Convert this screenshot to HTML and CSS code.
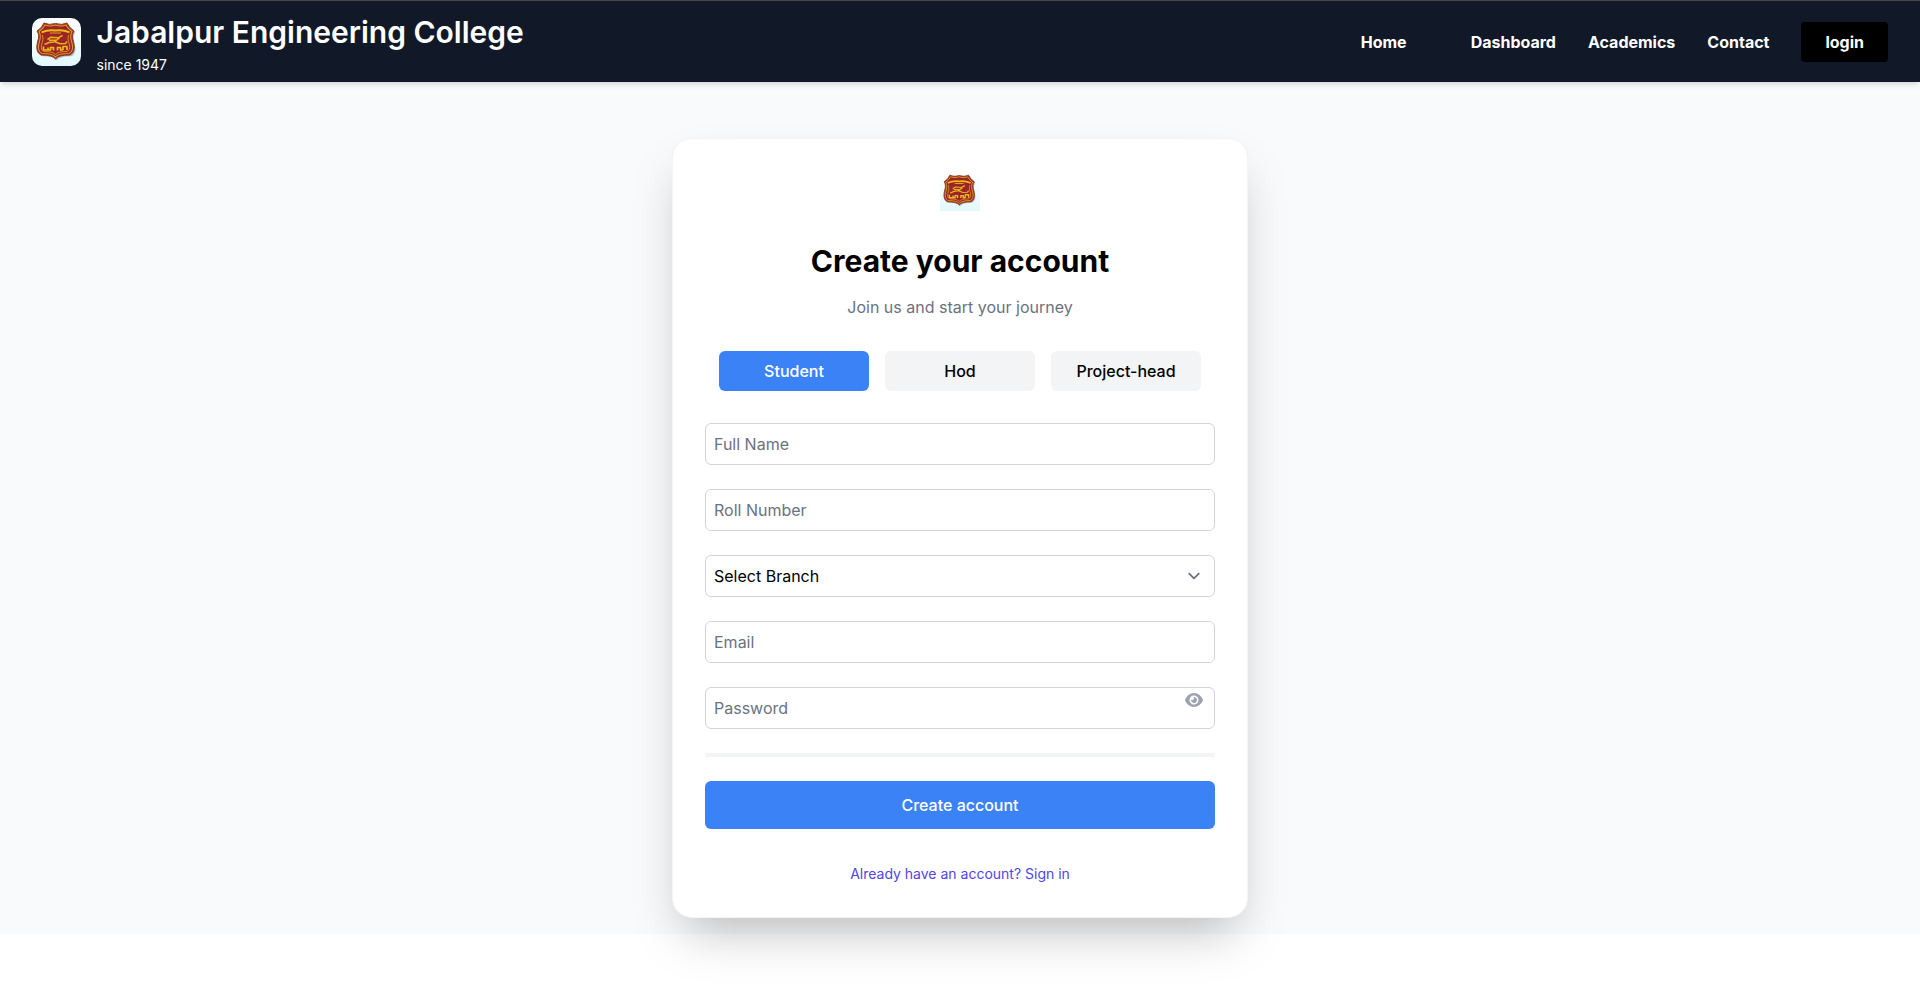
FILE: index.html
```html
<!DOCTYPE html>
<html lang="en">
<head>
<meta charset="utf-8">
<title>Jabalpur Engineering College</title>
<link rel="stylesheet" href="styles.css">
</head>
<body>
<svg class="defs" width="0" height="0" aria-hidden="true">
  <defs>
    <linearGradient id="plate" x1="0" y1="0" x2="0" y2="1">
      <stop offset="0" stop-color="#ffffff"/>
      <stop offset="1" stop-color="#e3f8fc"/>
    </linearGradient>
  </defs>
  <symbol id="crest" viewBox="0 0 49 48" preserveAspectRatio="none">
    <rect width="49" height="48" fill="url(#plate)"/>
    <path transform="translate(1.3 1.2)" opacity=".35" fill="#506068" d="M12 5Q18 8 23.500 8Q29 8 35 5L42 13Q39 18 41.500 25Q44 35 38 37Q27 37 23.500 41Q20 37 9 37Q3 35 5.500 25Q8 18 5 13Z"/>
    <path fill="#9c2328" stroke="#8b3a20" stroke-width="1" d="M12 5Q17 7.500 23.500 5.500Q30 7.500 35 5Q37 10 42 13Q39 17 41.500 24Q44 34 38 37Q26 37 23.500 41Q21 37 9 37Q3 34 5.500 24Q8 17 5 13Q10 10 12 5Z"/>
    <path fill="none" stroke="#d9a321" stroke-width="1.100" d="M13 7Q18 9 23.500 7Q29 9 34 7Q36 11 40 13.500Q37.500 18 40 25Q42 33 37 35.500Q26 35.500 23.500 39Q21 35.500 10 35.500Q5 33 7 25Q9.500 18 7 13.500Q11 11 13 7Z"/>
    <path fill="none" stroke="#d9a321" stroke-width=".9" d="M10.500 17Q12 21 9.500 27Q8.500 32 12 33.500Q21 33.500 23.500 36.500Q26 33.500 35 33.500Q38.500 32 37.500 27Q35 21 36.500 17"/>
    <path fill="none" stroke="#f0bb16" stroke-width="2" d="M9.500 14.300Q16 11.500 23.500 12.500Q31 11.500 37.500 14.300"/>
    <path fill="none" stroke="#d9a321" stroke-width="1.200" d="M18 15H29"/>
    <path fill="none" stroke="#e8b31a" stroke-width="1.500" stroke-linejoin="round" d="M15.500 21.500L19 19.200L26 19.800L30.500 17.500M27.500 20L22 24L17 24.500L12.500 26.500M22.500 23.500L28 25.800L33.500 25.500L35 23.500M17 22.300H24"/>
    <path fill="none" stroke="#f0bb16" stroke-width="1.700" stroke-linejoin="round" d="M11.500 28.500V32H16V29.500M18.500 32.500V29.500H21.500V32.500M25.500 32.500V29.500H28.500V32.500M31 32V28.500H35V32M16 32H19M28 32H31"/>
  </symbol>
</svg>
<header class="navbar">
  <div class="brand">
    <svg class="brand-logo"><use href="#crest"/></svg>
    <div class="brand-text">
      <div class="brand-name">Jabalpur Engineering College</div>
      <div class="brand-since">since 1947</div>
    </div>
  </div>
  <nav class="nav">
    <a>Home</a>
    <span></span>
    <a>Dashboard</a>
    <a>Academics</a>
    <a>Contact</a>
    <button class="login">login</button>
  </nav>
</header>
<main class="page">
  <section class="card">
    <svg class="card-logo"><use href="#crest"/></svg>
    <h1 class="title">Create your account</h1>
    <p class="subtitle">Join us and start your journey</p>
    <div class="roles">
      <button class="role role-active">Student</button>
      <button class="role">Hod</button>
      <button class="role">Project-head</button>
    </div>
    <form class="form">
      <input class="field" type="text" placeholder="Full Name">
      <input class="field" type="text" placeholder="Roll Number">
      <div class="field-wrap">
        <select class="field"><option>Select Branch</option></select>
        <svg class="chevron" viewBox="0 0 20 20"><path fill="none" stroke="#6b7280" stroke-width="1.5" stroke-linecap="round" stroke-linejoin="round" d="M6 8l4 4 4-4"/></svg>
      </div>
      <input class="field" type="email" placeholder="Email">
      <div class="field-wrap">
        <input class="field" type="password" placeholder="Password">
        <svg class="eye" viewBox="0 0 576 512"><path fill="currentColor" d="M288 32c-80.800 0-145.500 36.800-192.600 80.600C48.600 156 17.300 208 2.500 243.700c-3.300 7.900-3.300 16.700 0 24.600C17.300 304 48.600 356 95.400 399.400C142.500 443.200 207.200 480 288 480s145.500-36.800 192.600-80.600c46.800-43.500 78.100-95.400 93-131.100c3.300-7.900 3.300-16.700 0-24.600c-14.900-35.700-46.200-87.700-93-131.100C433.500 68.800 368.800 32 288 32zM144 256a144 144 0 1 1 288 0 144 144 0 1 1-288 0zm144-64c0 35.300-28.700 64-64 64c-7.100 0-13.900-1.200-20.300-3.300c-5.500-1.800-11.900 1.600-11.700 7.400c.3 6.900 1.300 13.800 3.200 20.700c13.700 51.200 66.400 81.600 117.600 67.900s81.600-66.400 67.900-117.600c-11.100-41.500-47.800-69.400-88.600-71.100c-5.800-.2-9.200 6.100-7.400 11.700c2.100 6.400 3.300 13.200 3.300 20.300z"/></svg>
      </div>
      <div class="strength"></div>
      <button class="submit" type="button">Create account</button>
    </form>
    <a class="signin">Already have an account? Sign in</a>
  </section>
</main>
</body>
</html>
```
FILE: styles.css
```css
* {
  box-sizing: border-box;
  margin: 0;
}

html {
  background: #fff;
}

body {
  min-height: 100vh;
  color: #000;
  font: 16px/24px Inter, sans-serif;
}

button,
input,
select {
  font: inherit;
  color: inherit;
  border: 0;
}

.defs {
  position: absolute;
}

.navbar {
  position: relative;
  height: 82px;
  padding: 1px 32px 0;
  display: flex;
  align-items: center;
  justify-content: space-between;
  background: #111827;
  border-top: 1px solid #444746;
  box-shadow: 0 4px 6px -1px rgba(0, 0, 0, .1), 0 2px 4px -2px rgba(0, 0, 0, .1);
  color: #fff;
}

.brand {
  display: flex;
  align-items: center;
  gap: 15.5px;
}

.brand-logo {
  width: 49px;
  height: 48px;
  border-radius: 10px;
}

.brand-text {
  padding-top: 5px;
}

.brand-name {
  font-size: 30px;
  line-height: 36px;
  font-weight: 600;
}

.brand-since {
  margin-top: 5px;
  font-size: 14px;
  line-height: 20px;
}

.nav {
  display: flex;
  align-items: center;
  gap: 32px;
  font-weight: 700;
}

.login {
  height: 40px;
  padding: 0 24px;
  border-radius: 4px;
  background: #000;
}

.page {
  height: 852px;
  padding-top: 56px;
  background: #f9fafb;
}

.card {
  width: 576px;
  height: 780px;
  margin: 0 auto;
  padding: 32px;
  display: flex;
  flex-direction: column;
  align-items: center;
  background: #fff;
  border: 1px solid #f3f4f6;
  border-radius: 20px;
  box-shadow: 0 25px 50px -12px rgba(0, 0, 0, .25);
}

.card-logo {
  width: 40px;
  height: 40px;
}

.title {
  margin-top: 32px;
  font-size: 30px;
  line-height: 36px;
  font-weight: 700;
}

.subtitle {
  margin-top: 16px;
  color: #6b7280;
}

.roles {
  margin: 32px 0;
  display: flex;
  gap: 16px;
}

.role {
  width: 150px;
  height: 40px;
  border-radius: 6px;
  background: #f3f4f6;
  font-weight: 500;
}

.role-active {
  background: #3b82f6;
  color: #fff;
}

.form {
  width: 100%;
  display: flex;
  flex-direction: column;
  gap: 24px;
}

.field-wrap {
  position: relative;
  display: flex;
}

.field {
  width: 100%;
  height: 42px;
  padding: 8px;
  appearance: none;
  background: #fff;
  border: 1px solid #d1d5db;
  border-radius: 6px;
}

.field::placeholder {
  color: #6b7280;
}

.chevron {
  position: absolute;
  top: 9px;
  right: 9px;
  width: 24px;
  height: 24px;
}

.eye {
  position: absolute;
  top: 5px;
  right: 12px;
  width: 18px;
  height: 16px;
  color: #9ca3af;
}

.strength {
  height: 4px;
  border-radius: 4px;
  background: #f3f4f6;
}

.submit {
  height: 48px;
  border-radius: 6px;
  background: #3b82f6;
  color: #fff;
  font-weight: 500;
}

.signin {
  margin-top: 35px;
  font-size: 14px;
  line-height: 20px;
  color: #4f46e5;
}
```
